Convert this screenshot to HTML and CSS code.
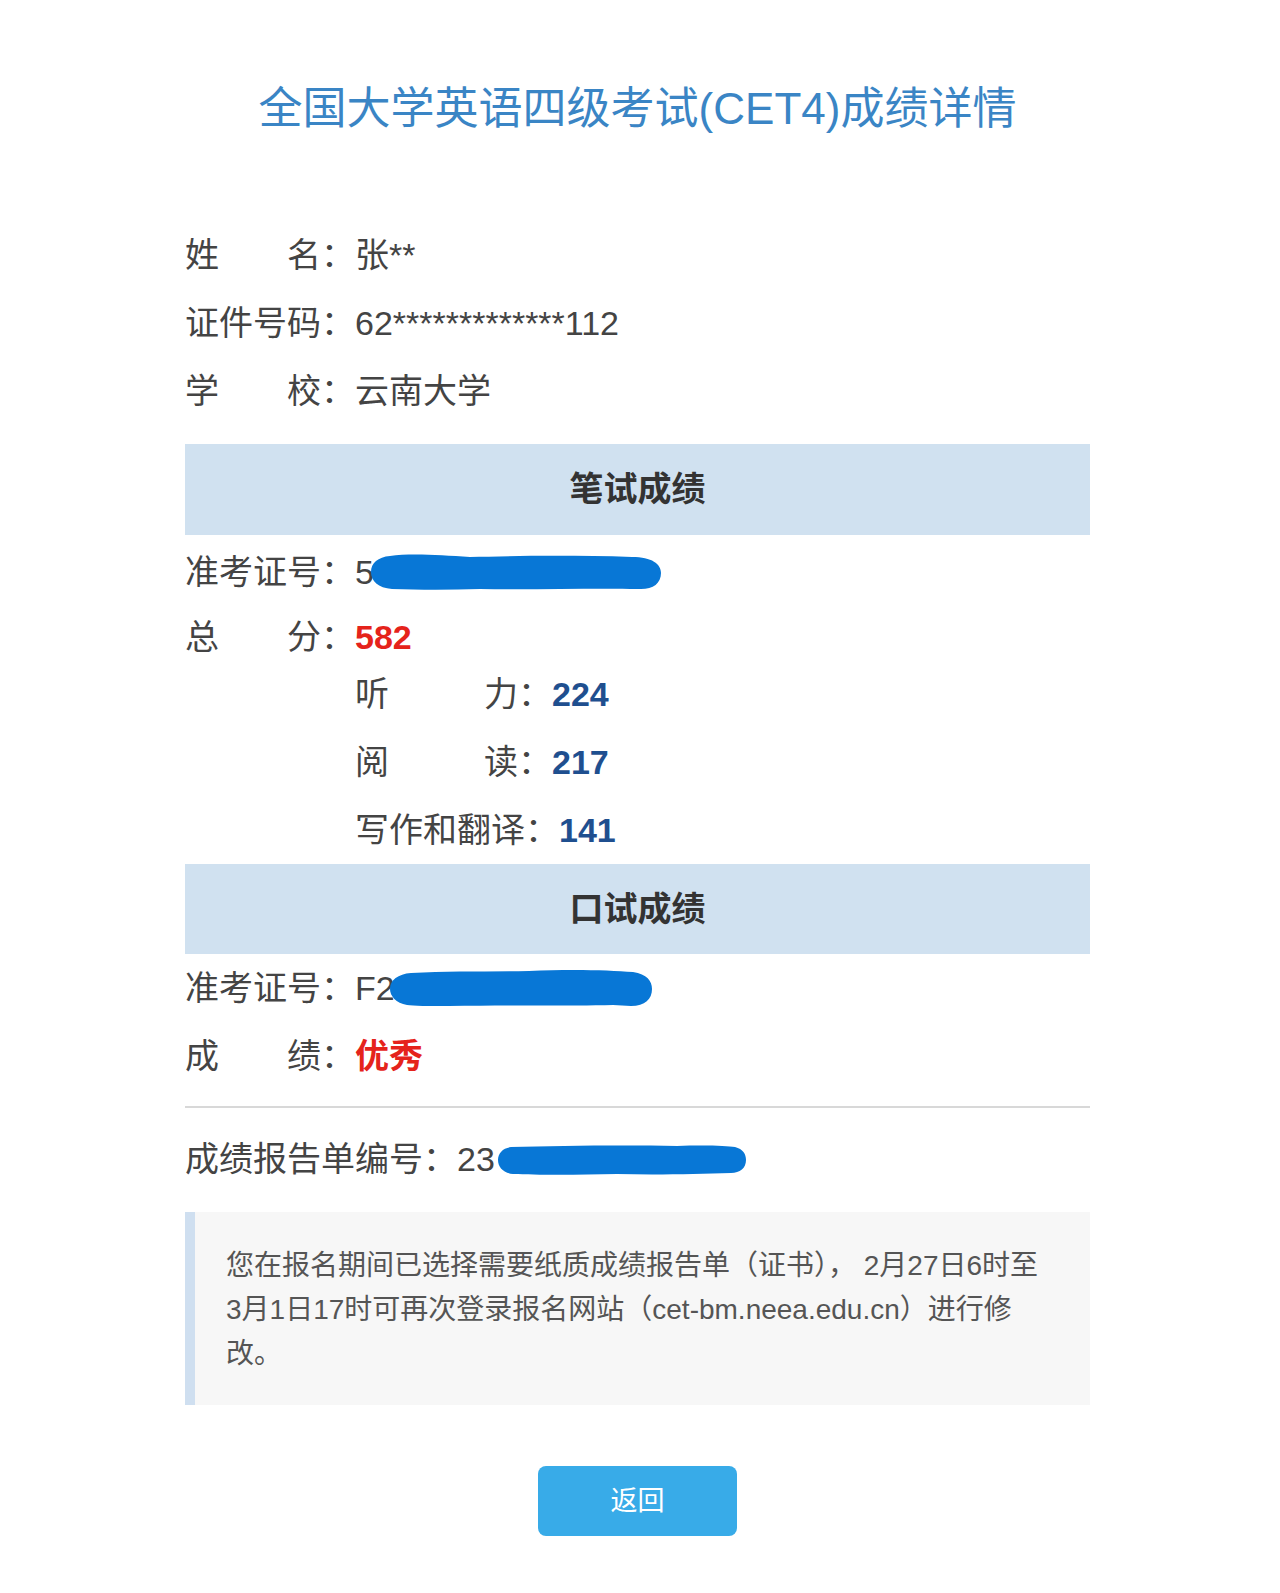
FILE: index.html
```html
<!DOCTYPE html>
<html lang="zh-CN">
<head>
<meta charset="utf-8">
<title>全国大学英语四级考试(CET4)成绩详情</title>
<link rel="stylesheet" href="styles.css">
</head>
<body>
<div class="page">
  <h1 class="title">全国大学英语四级考试(CET4)成绩详情</h1>

  <div class="info">
    <div class="row"><span class="lbl">姓名</span>：张**</div>
    <div class="row">证件号码：62*************112</div>
    <div class="row"><span class="lbl">学校</span>：云南大学</div>
  </div>

  <div class="band band-first">笔试成绩</div>
  <div class="row row-after-band">准考证号：5<svg class="blob blob-a" width="292" height="40" viewBox="0 0 292 40"><path d="M20 4 C40 1 70 3 100 5 C140 4 200 3 262 5 C282 5 291 12 291 21 C291 32 282 38 268 37 C220 36 160 38 110 37 C80 38 50 38 22 37 C8 36 1 29 1 20 C1 11 8 5 20 4 Z" fill="#0877d6"/></svg></div>
  <div class="row row-total"><span class="lbl">总分</span>：<b class="red">582</b></div>
  <div class="sub">
    <div class="row"><span class="lbl lbl-sub">听力</span>：<b class="blue">224</b></div>
    <div class="row"><span class="lbl lbl-sub">阅读</span>：<b class="blue">217</b></div>
    <div class="row">写作和翻译：<b class="blue">141</b></div>
  </div>

  <div class="band">口试成绩</div>
  <div class="row">准考证号：F2<svg class="blob blob-b" width="264" height="40" viewBox="0 0 264 40"><path d="M22 5 C60 3 100 4 140 3 C180 1 220 2 244 4 C258 6 263 13 263 21 C263 31 256 38 242 38 C236 38 230 37 224 37 C180 38 120 37 60 38 C40 38 24 38 18 37 C7 35 1 28 1 21 C1 12 9 6 22 5 Z" fill="#0877d6"/></svg></div>
  <div class="row"><span class="lbl">成绩</span>：<b class="red">优秀</b></div>

  <hr class="divider">

  <div class="row row-report">成绩报告单编号：23<svg class="blob blob-c" width="250" height="32" viewBox="0 0 250 32"><path d="M14 3 C60 2 120 1 180 2 C210 1 230 2 238 3 C246 5 249 10 249 16 C249 24 243 29 234 29 C200 30 160 31 120 30 C80 31 40 31 16 30 C6 29 1 23 1 16 C1 9 6 4 14 3 Z" fill="#0877d6"/></svg></div>

  <div class="note">您在报名期间已选择需要纸质成绩报告单（证书）， 2月27日6时至3月1日17时可再次登录报名网站（cet-bm.neea.edu.cn）进行修改。</div>

  <a class="btn" href="#">返回</a>
</div>
</body>
</html>
```

FILE: styles.css
```css
body {
  margin: 0;
  background: #ffffff;
  font-family: "Liberation Sans", "Noto Sans CJK SC", sans-serif;
  color: #444444;
}

.page {
  width: 905px;
  margin-left: 185px;
  padding-top: 79px;
  padding-bottom: 57px;
}

.title {
  margin: 0;
  text-align: center;
  font-size: 44px;
  font-weight: normal;
  line-height: 60px;
  color: #3a85c5;
}

.info {
  margin-top: 82px;
}

.row {
  font-size: 34px;
  line-height: 68px;
  height: 68px;
  white-space: nowrap;
}

.row-after-band {
  padding-top: 3px;
}

.lbl {
  display: inline-block;
  width: 4em;
  text-align: justify;
  text-align-last: justify;
  vertical-align: top;
}

.lbl-sub {
  width: 163px;
}

.row-total {
  height: 46px;
  line-height: 46px;
  padding-top: 8px;
}

.sub {
  padding-left: 170px;
}

.red {
  color: #e5231b;
  font-weight: bold;
}

.blue {
  color: #1f4f8f;
  font-weight: bold;
}

.band {
  height: 90px;
  line-height: 90px;
  background: #d0e1f0;
  text-align: center;
  font-size: 34px;
  font-weight: bold;
  color: #333333;
}

.band-first {
  margin-top: 19px;
  height: 91px;
  line-height: 91px;
}

.blob {
  display: inline-block;
  vertical-align: middle;
  margin-left: -4px;
}

.blob-a {
  margin-top: -6px;
}

.blob-b {
  margin-left: -6px;
  margin-top: -6px;
}

.blob-c {
  margin-left: 2px;
  margin-top: -4px;
}

.divider {
  margin: 16px 0 0;
  border: 0;
  height: 2px;
  background: #d8d8d8;
}

.row-report {
  margin-top: 17px;
}

.note {
  margin-top: 19px;
  background: #f7f7f7;
  border-left: 10px solid #cfdff0;
  padding: 32px 44px 29px 31px;
  font-size: 28px;
  line-height: 44px;
  color: #555555;
}

.btn {
  display: block;
  width: 199px;
  height: 70px;
  margin: 61px auto 0;
  background: #38abe8;
  border-radius: 8px;
  color: #ffffff;
  font-size: 27px;
  line-height: 70px;
  text-align: center;
  text-decoration: none;
}
```
